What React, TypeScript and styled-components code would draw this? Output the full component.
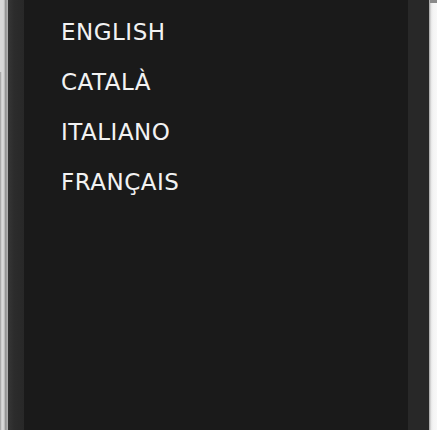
import React from "react";
import styled, { createGlobalStyle } from "styled-components";

const Global = createGlobalStyle`
  html, body { margin: 0; padding: 0; background: #1a1a1a; }
  #root { height: 430px; }
`;

const Device = styled.div`
  display: flex;
  width: 437px;
  height: 430px;
  overflow: hidden;
`;

const Bezel = styled.div<{ $side: "left" | "right" }>`
  position: relative;
  width: 8px;
  flex: none;
  background: ${(p) =>
    p.$side === "left"
      ? "linear-gradient(to right, #8c8c8c 0, #c8c8c8 1px, #e0e0e0 3px, #b0b0b0 5px, #7a7a7a 6px, #c4c4c4 7px, #9a9a9a 8px)"
      : "linear-gradient(to right, #a0a0a0 0, #c0c0c0 1px, #e6e6e6 2px, #f4f4f4 4px, #f8f8f8 8px)"};
`;

const SideButton = styled.div<{ $side: "left" | "right" }>`
  position: absolute;
  top: 0;
  ${(p) => (p.$side === "left" ? "left: 0; width: 3px; height: 72px; background: #d8d8d8;" : "left: 1px; width: 7px; height: 3px; background: #8a8a8a;")}
`;

const Edge = styled.div<{ $w: number }>`
  width: ${(p) => p.$w}px;
  flex: none;
  background: #282828;
`;

const LeftEdge = styled(Edge)`
  background: linear-gradient(to right, #363636 0, #2c2c2c 6px, #282828 16px);
`;

const Screen = styled.div`
  flex: 1;
  background: #1a1a1a;
  display: flex;
  flex-direction: column;
  padding: 7px 0 0 37px;
`;

const LangItem = styled.div`
  font-family: "DejaVu Sans", Verdana, sans-serif;
  font-size: 23px;
  line-height: 50px;
  color: #f2f2f2;
  letter-spacing: 0.5px;
`;

const languages = ["ENGLISH", "CATALÀ", "ITALIANO", "FRANÇAIS"];

export default function App() {
  return (
    <>
      <Global />
      <Device>
        <Bezel $side="left">
          <SideButton $side="left" />
        </Bezel>
        <LeftEdge $w={16} />
        <Screen>
          {languages.map((l) => (
            <LangItem key={l}>{l}</LangItem>
          ))}
        </Screen>
        <Edge $w={21} />
        <Bezel $side="right">
          <SideButton $side="right" />
        </Bezel>
      </Device>
    </>
  );
}
